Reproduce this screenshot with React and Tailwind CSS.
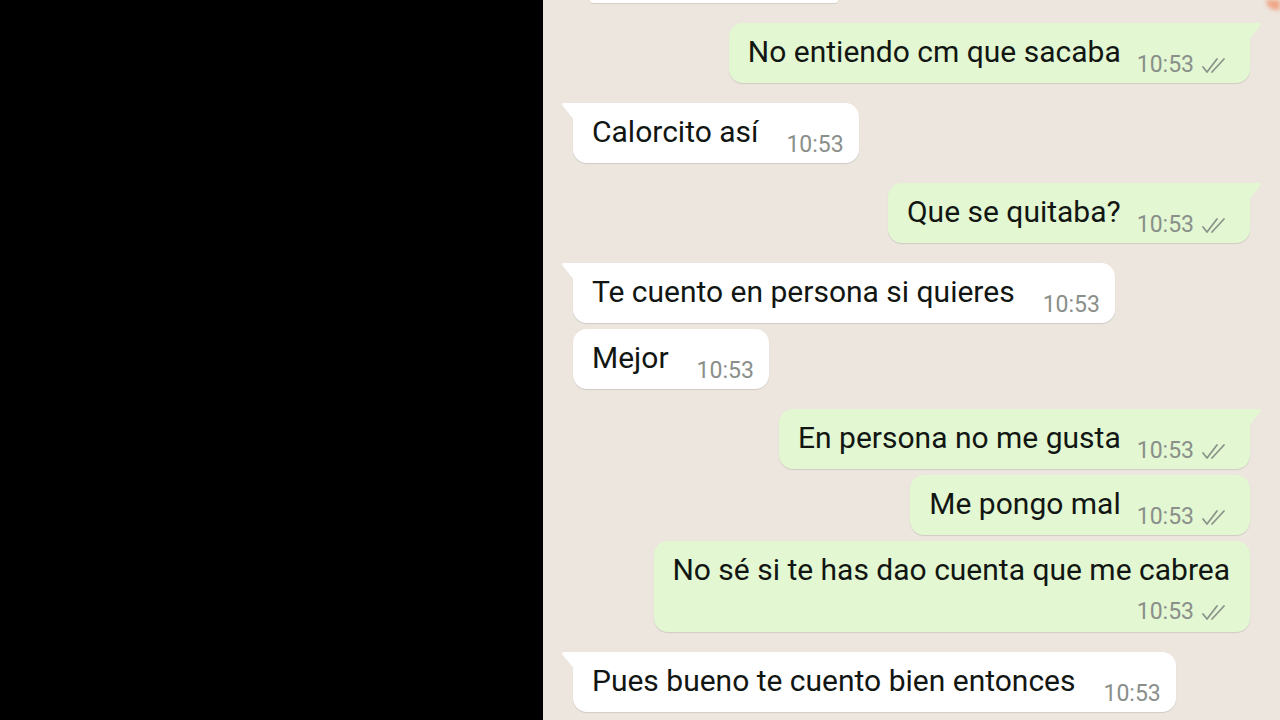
import React from "react";

const messages = [
  { out: true, text: "No entiendo cm que sacaba", tail: true },
  { out: false, text: "Calorcito así", tail: true },
  { out: true, text: "Que se quitaba?", tail: true },
  { out: false, text: "Te cuento en persona si quieres", tail: true },
  { out: false, text: "Mejor" },
  { out: true, text: "En persona no me gusta", tail: true },
  { out: true, text: "Me pongo mal" },
  { out: true, text: "No sé si te has dao cuenta que me cabrea", wrap: true },
  { out: false, text: "Pues bueno te cuento bien entonces", tail: true },
];

const Checks = () => (
  <svg width="30" height="17" viewBox="0 0 30 17" className="ml-[6px] mb-[2px]">
    <polyline points="3,10 7,15 17,2" fill="none" stroke="#8b948b" strokeWidth="1.8" strokeLinecap="round" strokeLinejoin="round" />
    <polyline points="12,15 24,2" fill="none" stroke="#8b948b" strokeWidth="1.8" strokeLinecap="round" />
  </svg>
);

const Meta = ({ out }) => (
  <span className="flex items-end text-[23px] leading-none text-[#8a8f8a] translate-y-[7px]">
    10:53
    {out && <Checks />}
  </span>
);

const Tail = ({ out }) =>
  out ? (
    <svg width="14" height="18" viewBox="0 0 14 18" className="absolute top-0 -right-[12px]">
      <path d="M0 0 H11 Q14 0 12.5 2.5 L0 18 Z" fill="#e3f7d2" />
    </svg>
  ) : (
    <svg width="14" height="18" viewBox="0 0 14 18" className="absolute top-0 -left-[12px]">
      <path d="M14 0 H3 Q0 0 1.5 2.5 L14 18 Z" fill="#ffffff" />
    </svg>
  );

const Bubble = ({ m }) => {
  const base = m.out ? "bg-[#e3f7d2] self-end" : "bg-white self-start";
  const corner = m.tail ? (m.out ? "rounded-tr-none" : "rounded-tl-none") : "";
  if (m.wrap) {
    return (
      <div className={`relative ${base} rounded-[14px] ${corner} shadow-[0_1px_1px_rgba(0,0,0,0.12)] pl-[18px] pr-[20px] pt-[12px] pb-[16px] flex flex-col`}>
        <span className="text-[30px] leading-[34px] text-[#121612]">{m.text}</span>
        <span className="self-end mt-[6px]">
          <Meta out={m.out} />
        </span>
        {m.tail && <Tail out={m.out} />}
      </div>
    );
  }
  return (
    <div className={`relative ${base} rounded-[14px] ${corner} shadow-[0_1px_1px_rgba(0,0,0,0.12)] pl-[19px] ${m.out ? "pr-[20px]" : "pr-[15px]"} pt-[12px] pb-[14px] flex items-end`}>
      <span className="text-[30px] leading-[34px] text-[#121612]">{m.text}</span>
      <span className={m.out ? "ml-[16px]" : "ml-[28px]"}>
        <Meta out={m.out} />
      </span>
      {m.tail && <Tail out={m.out} />}
    </div>
  );
};

export default function App() {
  return (
    <div className="w-[1280px] h-[720px] flex overflow-hidden bg-black font-['Roboto',sans-serif]">
      <div className="w-[543px] bg-black" />
      <div className="relative flex-1 bg-[#ede6df] flex flex-col px-[30px] overflow-hidden">
        <div className="ml-[17px] w-[248px] h-[3px] bg-white rounded-b-[6px] shadow-[0_1px_1px_rgba(0,0,0,0.1)]" />
        <div className="flex flex-col pt-[20px]">
          {messages.map((m, i) => {
            const prev = messages[i - 1];
            const gap = i === 0 ? "" : prev && prev.out === m.out ? "mt-[6px]" : "mt-[20px]";
            return (
              <div key={i} className={`flex flex-col ${gap}`}>
                <Bubble m={m} />
              </div>
            );
          })}
        </div>
        <div className="absolute top-0 right-0 w-[14px] h-[10px] rounded-bl-full bg-[#f08a5d] opacity-70 blur-[2px]" />
      </div>
    </div>
  );
}
